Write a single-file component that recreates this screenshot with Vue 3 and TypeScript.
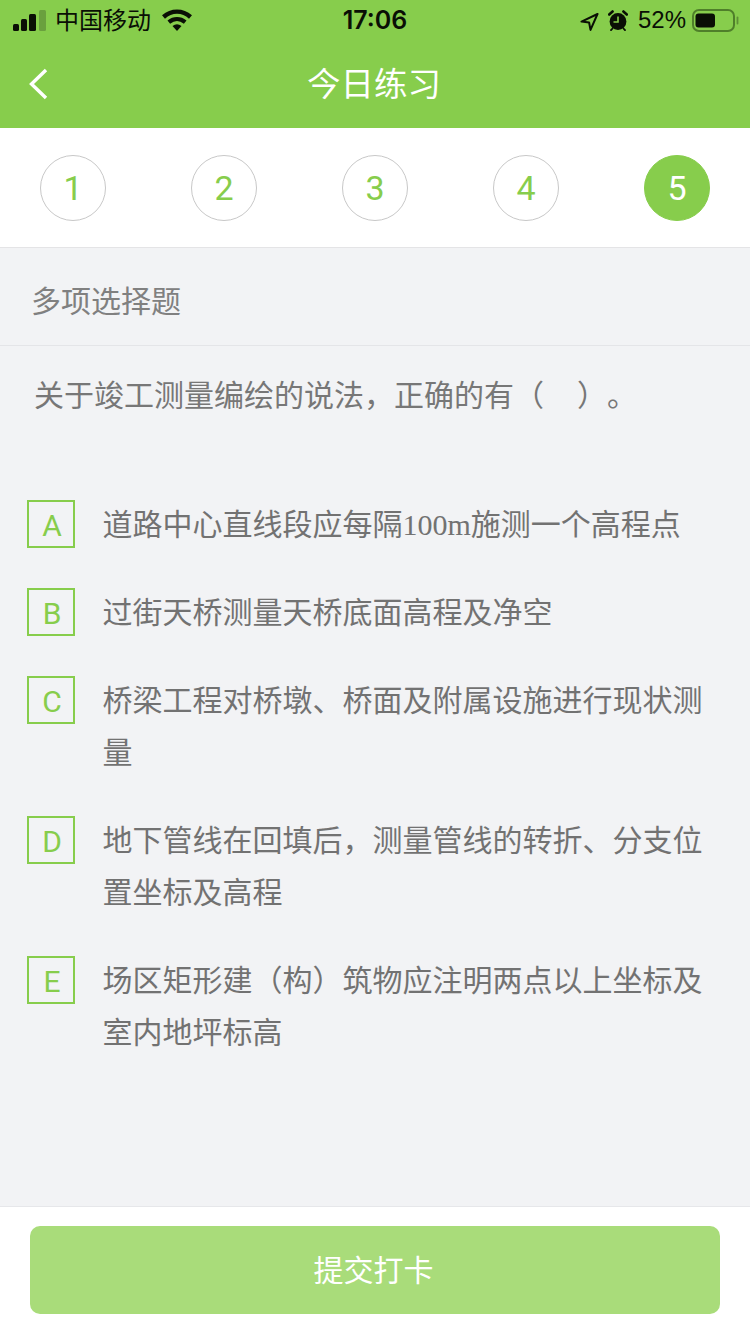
<script setup lang="ts">
const steps = [1, 2, 3, 4, 5]
const options = [
  { key: 'A', parts: ['道路中心直线段应每隔', '100m', '施测一个高程点'] },
  { key: 'B', parts: ['过街天桥测量天桥底面高程及净空'] },
  { key: 'C', parts: ['桥梁工程对桥墩、桥面及附属设施进行现状测量'] },
  { key: 'D', parts: ['地下管线在回填后，测量管线的转折、分支位置坐标及高程'] },
  { key: 'E', parts: ['场区矩形建（构）筑物应注明两点以上坐标及室内地坪标高'] },
]
</script>

<template>
  <div class="page">
    <header class="head">
      <div class="status">
        <div class="status-left">
          <svg class="signal" width="33" height="21" viewBox="0 0 33 21">
            <rect x="0" y="14" width="6" height="7" rx="1.5" fill="#0a0f05" />
            <rect x="8" y="9" width="6" height="12" rx="1.5" fill="#0a0f05" />
            <rect x="16" y="4" width="7" height="17" rx="1.5" fill="#0a0f05" />
            <rect x="26" y="0" width="7" height="21" rx="1.5" fill="#6aa03e" />
          </svg>
          <span class="carrier">中国移动</span>
          <svg class="wifi" width="30" height="22" viewBox="0 0 30 22">
            <path d="M1.5 8C9.5 .8 20.5 .8 28.5 8" fill="none" stroke="#0a0f05" stroke-width="4.4" />
            <path d="M6.8 13.2c5-4 11.4-4 16.4 0" fill="none" stroke="#0a0f05" stroke-width="4.2" />
            <path d="M10.5 17c3-2.2 6-2.2 9 0L15 22z" fill="#0a0f05" />
          </svg>
        </div>
        <span class="time">17:06</span>
        <div class="status-right">
          <svg class="loc" width="19" height="18" viewBox="0 0 19 18">
            <path d="M17.5 1 1.5 8.6l7.6.9 1.4 7.4z" fill="none" stroke="#0a0f05" stroke-width="2" stroke-linejoin="round" />
          </svg>
          <svg class="alarm" width="20" height="21" viewBox="0 0 20 21">
            <circle cx="10" cy="11.5" r="8.4" fill="#0a0f05" />
            <path d="M10 6.5V12H5.5" fill="none" stroke="#87cd4c" stroke-width="1.6" />
            <path d="M1.2 4.5 4.6 1.5M18.8 4.5 15.4 1.5" stroke="#0a0f05" stroke-width="2.6" stroke-linecap="round" />
            <path d="M4.5 18.5 3 20.2M15.5 18.5 17 20.2" stroke="#0a0f05" stroke-width="1.8" stroke-linecap="round" />
          </svg>
          <span class="pct">52%</span>
          <svg class="battery" width="47" height="23" viewBox="0 0 47 23">
            <rect x="1" y="1" width="41" height="21" rx="6" fill="none" stroke="#4f7f2a" stroke-width="2" />
            <rect x="3.5" y="4.5" width="19.5" height="14" rx="3" fill="#0a0f05" />
            <path d="M45.5 8.5v6" stroke="#5d8f35" stroke-width="1.8" stroke-linecap="round" />
          </svg>
        </div>
      </div>
      <div class="nav">
        <svg class="back" width="20" height="32" viewBox="0 0 20 32">
          <path d="M18 2 3.5 16 18 30" fill="none" stroke="#fff" stroke-width="3.4" />
        </svg>
        <h1 class="title">今日练习</h1>
      </div>
    </header>

    <div class="steps">
      <div v-for="n in steps" :key="n" class="step" :class="{ active: n === 5 }">{{ n }}</div>
    </div>

    <main class="main">
      <div class="type">多项选择题</div>
      <p class="question">关于竣工测量编绘的说法，正确的有（&nbsp;&nbsp;&nbsp;&nbsp;&thinsp;）。</p>
      <ul class="options">
        <li v-for="o in options" :key="o.key" class="option">
          <span class="letter">{{ o.key }}</span>
          <span class="text"><template v-for="(p, i) in o.parts" :key="i"><span v-if="p === '100m'" class="latin">{{ p }}</span><template v-else>{{ p }}</template></template></span>
        </li>
      </ul>
    </main>

    <footer class="foot">
      <button class="submit" type="button">提交打卡</button>
    </footer>
  </div>
</template>

<style scoped>
.page {
  width: 750px;
  height: 1334px;
  display: flex;
  flex-direction: column;
  background: #f2f3f5;
  font-family: "Noto Sans CJK SC", "Liberation Sans", sans-serif;
  overflow: hidden;
}
.head {
  height: 128px;
  background: #87cd4c;
  flex: none;
}
.status {
  height: 40px;
  padding: 0 11px 0 13px;
  display: grid;
  grid-template-columns: 1fr auto 1fr;
  align-items: center;
  color: #0a0f05;
}
.status-left,
.status-right {
  display: flex;
  align-items: center;
}
.status-right {
  justify-content: flex-end;
}
.carrier {
  margin-left: 9px;
  font-size: 24px;
  line-height: 38px;
  height: 40px;
}
.wifi {
  margin-left: 11px;
}
.time {
  font-family: Inter, "Liberation Sans", sans-serif;
  font-size: 25px;
  font-weight: 600;
  margin-right: 2px;
}
.pct {
  font-family: "Liberation Sans", sans-serif;
  font-size: 24px;
  margin-left: 10px;
  margin-right: 6px;
}
.alarm {
  margin-left: 9px;
}
.loc {
  position: relative;
  top: 2px;
}
.nav {
  height: 88px;
  display: flex;
  align-items: center;
  justify-content: center;
  position: relative;
}
.back {
  position: absolute;
  left: 28px;
  top: 28px;
}
.title {
  margin: 0;
  color: #fff;
  font-size: 33.5px;
  font-weight: 400;
  line-height: 88px;
  position: relative;
  top: -2px;
  left: -1px;
}
.steps {
  flex: none;
  height: 119px;
  box-sizing: content-box;
  padding: 0 40px;
  background: #fff;
  border-bottom: 1px solid #e4e4e6;
  display: flex;
  justify-content: space-between;
  align-items: center;
}
.step {
  width: 66px;
  height: 66px;
  box-sizing: border-box;
  border: 1px solid #c8c8c8;
  border-radius: 50%;
  display: flex;
  align-items: center;
  justify-content: center;
  font-family: Roboto, "Liberation Sans", sans-serif;
  font-weight: 400;
  font-size: 34px;
  color: #87cd4c;
}
.step.active {
  background: #87cd4c;
  border-color: #87cd4c;
  color: #fff;
}
.main {
  flex: 1;
  min-height: 0;
}
.type {
  height: 98px;
  box-sizing: border-box;
  border-bottom: 1px solid #e4e5e8;
  padding-left: 31px;
  font-size: 30px;
  line-height: 102px;
  color: #808080;
}
.question {
  margin: 0;
  padding: 21px 34px 0;
  font-size: 30px;
  line-height: 52px;
  color: #777;
  text-spacing-trim: space-all;
}
.options {
  list-style: none;
  margin: 0;
  padding: 0 27px;
  position: relative;
  top: 81px;
  display: flex;
  flex-direction: column;
  gap: 36px;
}
.option {
  display: flex;
  align-items: flex-start;
}
.letter {
  flex: none;
  width: 48px;
  height: 48px;
  box-sizing: border-box;
  border: 2px solid #87cd4c;
  padding: 2px 0 0 2px;
  display: flex;
  align-items: center;
  justify-content: center;
  font-family: Roboto, "Liberation Sans", sans-serif;
  font-weight: 400;
  font-size: 30px;
  color: #87cd4c;
}
.text {
  margin: -4px 0 4px 27.5px;
  width: 601px;
  font-size: 30px;
  line-height: 52px;
  color: #727272;
}
.latin {
  font-family: "Liberation Serif", serif;
  line-height: 1;
}
.foot {
  flex: none;
  height: 128px;
  box-sizing: border-box;
  background: #fff;
  border-top: 1px solid #e6e7ea;
  padding: 19px 30px 0;
}
.submit {
  display: block;
  width: 690px;
  height: 88px;
  padding: 0 3px 4px 0;
  border: 0;
  border-radius: 10px;
  background: #a9dc7a;
  color: #fff;
  font-family: inherit;
  font-size: 30px;
}
</style>
